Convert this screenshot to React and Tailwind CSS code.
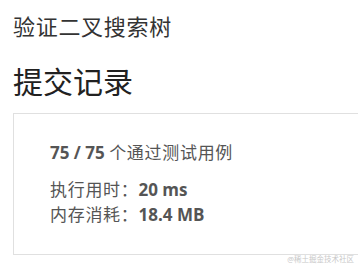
import React from 'react';

const cjk = { fontFamily: '"Open Sans", "Noto Sans CJK SC", sans-serif' };

export default function App() {
  return (
    <div className="relative h-[267px] w-[358px] overflow-hidden bg-white pl-[13px] pt-[12px]" style={cjk}>
      {/* problem title */}
      <h1 className="text-[22px] leading-[28px] font-normal tracking-[0.7px] text-[#333]">验证二叉搜索树</h1>

      <h2 className="mt-[24px] text-[30px] leading-[36px] font-normal text-[#212121]">提交记录</h2>

      {/* result card */}
      <div className="mt-[13px] h-[142px] w-[400px] border border-[#e0e0e0] pl-[36px] pt-[27px] text-[17px] text-[#555]">
        <div className="leading-[24px]">
          <span className="font-bold">75 / 75</span> <span className="tracking-[0.7px]">个通过测试用例</span>
        </div>
        <div className="mt-[12px] leading-[25px]">
          <span className="tracking-[0.7px]">执行用时：</span><span className="font-bold">20 ms</span>
        </div>
        <div className="leading-[25px]">
          <span className="tracking-[0.7px]">内存消耗：</span><span className="font-bold">18.4 MB</span>
        </div>
      </div>

      <div className="absolute bottom-[3px] right-[4px] text-[7.5px] leading-[10px] text-[#c8c8c8]">
        @稀土掘金技术社区
      </div>
    </div>
  );
}
